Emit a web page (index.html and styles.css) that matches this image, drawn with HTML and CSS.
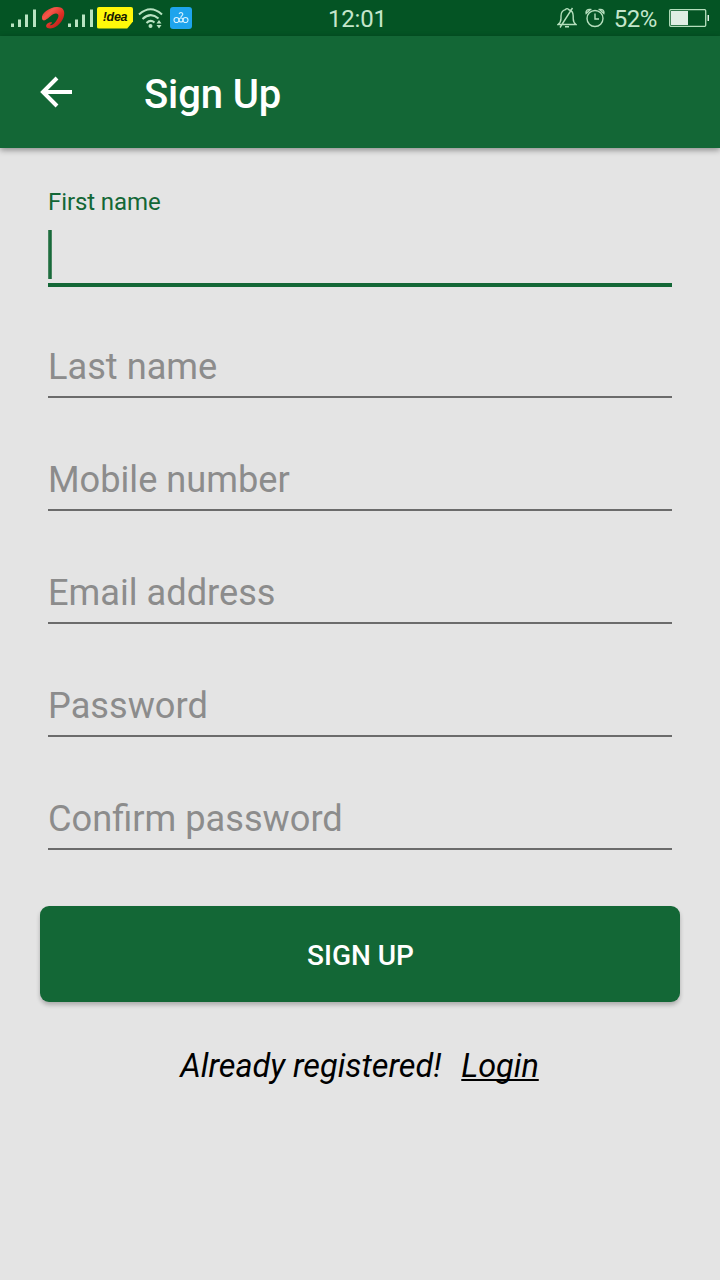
FILE: index.html
```html
<!DOCTYPE html>
<html lang="en">
<head>
<meta charset="utf-8">
<title>Sign Up</title>
<link rel="stylesheet" href="styles.css">
</head>
<body>
<header class="status">
  <div class="status-left">
    <svg class="signal" width="26" height="20" viewBox="0 0 26 20"><path d="M2.500 15.500v3.500M9.500 11.500v7.500M16.500 6.500v12.500M24.500 1.500v17.500"/></svg>
    <svg class="carrier" width="25" height="24" viewBox="0 0 25 24">
      <defs><linearGradient id="red" x1="0" y1="0" x2="1" y2="1"><stop offset="0" stop-color="#c9281f"/><stop offset=".3" stop-color="#f6574a"/><stop offset=".6" stop-color="#dc2f24"/><stop offset="1" stop-color="#a81a17"/></linearGradient></defs>
      <path fill="url(#red)" d="M1 12C0 8 8 1 16 1c7 0 8.500 5 6.500 10.500C20 18 14 22.500 9 22.500c-4 0-5-3-2.500-5 1.500-1.200 4-1.800 4.500-1s-1.500 1.500-2 2.500c1 .8 3-.2 5-2.500 3-3.300 5-8 2-8.700C12 6.500 8.500 12 4.500 14 2.500 15 1 14 1 12z"/>
    </svg>
    <svg class="signal" width="26" height="20" viewBox="0 0 26 20"><path d="M1.500 15.500v3.500M8.500 11.500v7.500M15.500 6.500v12.500M23.500 1.500v17.500"/></svg>
    <span class="idea">!dea</span>
    <svg class="wifi" width="26" height="22" viewBox="0 0 26 22"><path d="M1 7.500Q12.500-3 24 7.500M4.500 12Q12.500 4.500 20.500 11.500M8.500 16Q12.500 12 16.500 15.500"/><circle cx="12.500" cy="19" r="2"/><path class="solid" d="M18.500 16.500l2.500-3.500 2.500 3.500zM18.500 18h5l-2.500 3.500z"/></svg>
    <svg class="share" width="22" height="22" viewBox="0 0 22 22"><rect width="22" height="22" rx="3"/><path d="M9.200 7a1.800 1.600 0 1 1 3.200 1.200L10.500 10.500M6.500 10.500a2.500 2.500 0 1 0 0 5 2.500 2.500 0 0 0 0-5zM15.500 10.500a2.500 2.500 0 1 0 0 5 2.500 2.500 0 0 0 0-5z"/><circle cx="11" cy="13" r="2"/></svg>
  </div>
  <span class="clock">12:01</span>
  <div class="status-right">
    <svg class="line-icon" width="20" height="22" viewBox="0 0 20 22"><path d="M1 17.500h18c-2-1.500-2.800-3-2.800-6V9c0-3.500-2-5.800-4.400-6.300Q10 .5 8.300 2.700C5.500 3.500 4 6 4 9v2.500c0 3-1 4.500-3 6zM8 19.800h4M15.500 1L3 20.500"/></svg>
    <svg class="line-icon alarm" width="20" height="22" viewBox="0 0 20 22"><circle cx="10" cy="11.500" r="8"/><path d="M10 6.500v5.500h4M1.200 6.500C.5 3.500 2.500 2 5.500 2.500zM18.800 6.500C19.500 3.500 17.500 2 14.500 2.500z"/></svg>
    <span class="percent">52%</span>
    <svg class="battery" width="41" height="18" viewBox="0 0 41 18"><rect class="shell" x=".7" y=".7" width="36" height="16.600" rx="1"/><rect x="2" y="2" width="17" height="14"/><rect x="38.500" y="6" width="1.500" height="6"/></svg>
  </div>
</header>
<nav class="toolbar">
  <svg class="back" width="32" height="32" viewBox="0 0 32 32"><path d="M32 16H4M17 2L3 16l14 14"/></svg>
  <h1>Sign Up</h1>
</nav>
<main>
  <form>
    <div class="field active"><label>First name</label><div class="entry"><i class="caret"></i></div></div>
    <div class="field">Last name</div>
    <div class="field">Mobile number</div>
    <div class="field">Email address</div>
    <div class="field">Password</div>
    <div class="field">Confirm password</div>
    <button class="submit" type="button">SIGN UP</button>
  </form>
  <p class="login"><span>Already registered!</span><a>Login</a></p>
</main>
</body>
</html>
```
FILE: styles.css
```css
* { box-sizing: border-box; }
body {
  margin: 0;
  height: 1280px;
  background: #e4e4e4;
  font-family: Roboto, "Liberation Sans", sans-serif;
  overflow: hidden;
}
svg { display: block; flex: none; }
.status {
  height: 36px;
  padding-bottom: 1px;
  display: grid;
  grid-template-columns: 328px auto 1fr;
  align-items: center;
  background: #045424;
  color: #c4e6cb;
  font-size: 24px;
  line-height: 30px;
}
.status-left, .status-right { display: flex; align-items: center; height: 35px; }
.status-left { padding-left: 10px; }
.status-right { justify-content: flex-end; padding-right: 10px; }
.signal { fill: none; stroke: #b9e3c2; stroke-width: 3; }
.carrier { margin: 0 2px 0 5px; }
.idea {
  width: 36px;
  height: 22px;
  margin: 0 5px 0 3px;
  background: #fff80a;
  clip-path: polygon(0 0, 100% 0, 100% 68%, 84% 100%, 0 100%);
  border-radius: 2px;
  color: #181800;
  font: italic bold 12.5px/21px "Liberation Sans", sans-serif;
  text-align: center;
  letter-spacing: -.3px;
}
.wifi { fill: none; stroke: #b9e3c2; stroke-width: 2; margin-right: 6px; }
.wifi circle, .wifi .solid { fill: #b9e3c2; stroke: none; }
.share { fill: none; stroke: #d8f2ff; stroke-width: 1.1; }
.share rect { fill: #1ea4ed; stroke: none; }
.clock { padding-top: 3px; letter-spacing: -.2px; }
.line-icon { fill: none; stroke: #b5dfbd; stroke-width: 1.4; }
.alarm { margin: 0 9px 0 8px; }
.percent { padding-top: 2px; margin-right: 12px; letter-spacing: -.4px; }
.battery { fill: #e0eee4; }
.battery .shell { fill: none; stroke: #b5dfbd; stroke-width: 1.3; }
.toolbar {
  height: 112px;
  display: flex;
  align-items: center;
  padding: 0 40px;
  background: #136736;
  color: #fff;
  box-shadow: 0 2px 6px rgba(0, 0, 0, .4);
}
.back { fill: none; stroke: #fff; stroke-width: 4; }
h1 { margin: 6px 0 0 72px; font-size: 40px; line-height: 48px; font-weight: 500; letter-spacing: -.1px; }
main { padding: 0 40px; }
form { display: flex; flex-direction: column; }
.field {
  height: 113px;
  margin: 0 8px;
  padding-bottom: 8px;
  display: flex;
  align-items: flex-end;
  border-bottom: 2px solid #6b6b6b;
  color: #8c8c8c;
  font-size: 36.2px;
  line-height: 43px;
}
.active {
  height: 139px;
  flex-direction: column;
  align-items: stretch;
  padding: 39px 0 0;
  border-bottom: 4px solid #136736;
  color: #136736;
}
.active + .field { height: 111px; }
.active label { font-size: 24px; line-height: 30px; letter-spacing: -.1px; }
.entry { padding-top: 13px; }
.caret {
  display: block;
  width: 4px;
  height: 49px;
  background: linear-gradient(90deg, #5e9272, #136736 45%, #136736 60%, #5e9272);
}
.submit {
  height: 96px;
  margin-top: 56px;
  padding: 4px 0 0 1px;
  border: 0;
  border-radius: 9px;
  background: #136736;
  box-shadow: 0 3px 4px rgba(0, 0, 0, .24);
  color: #fff;
  font: 500 28px/34px Roboto, sans-serif;
}
.login {
  display: flex;
  justify-content: center;
  gap: 20px;
  margin: 45px 1px 0 0;
  color: #000;
  font-size: 32.4px;
  font-style: italic;
  line-height: 38px;
}
.login a {
  text-decoration: underline;
  text-decoration-thickness: 2px;
  text-underline-offset: 2px;
  text-decoration-skip-ink: none;
}
```
